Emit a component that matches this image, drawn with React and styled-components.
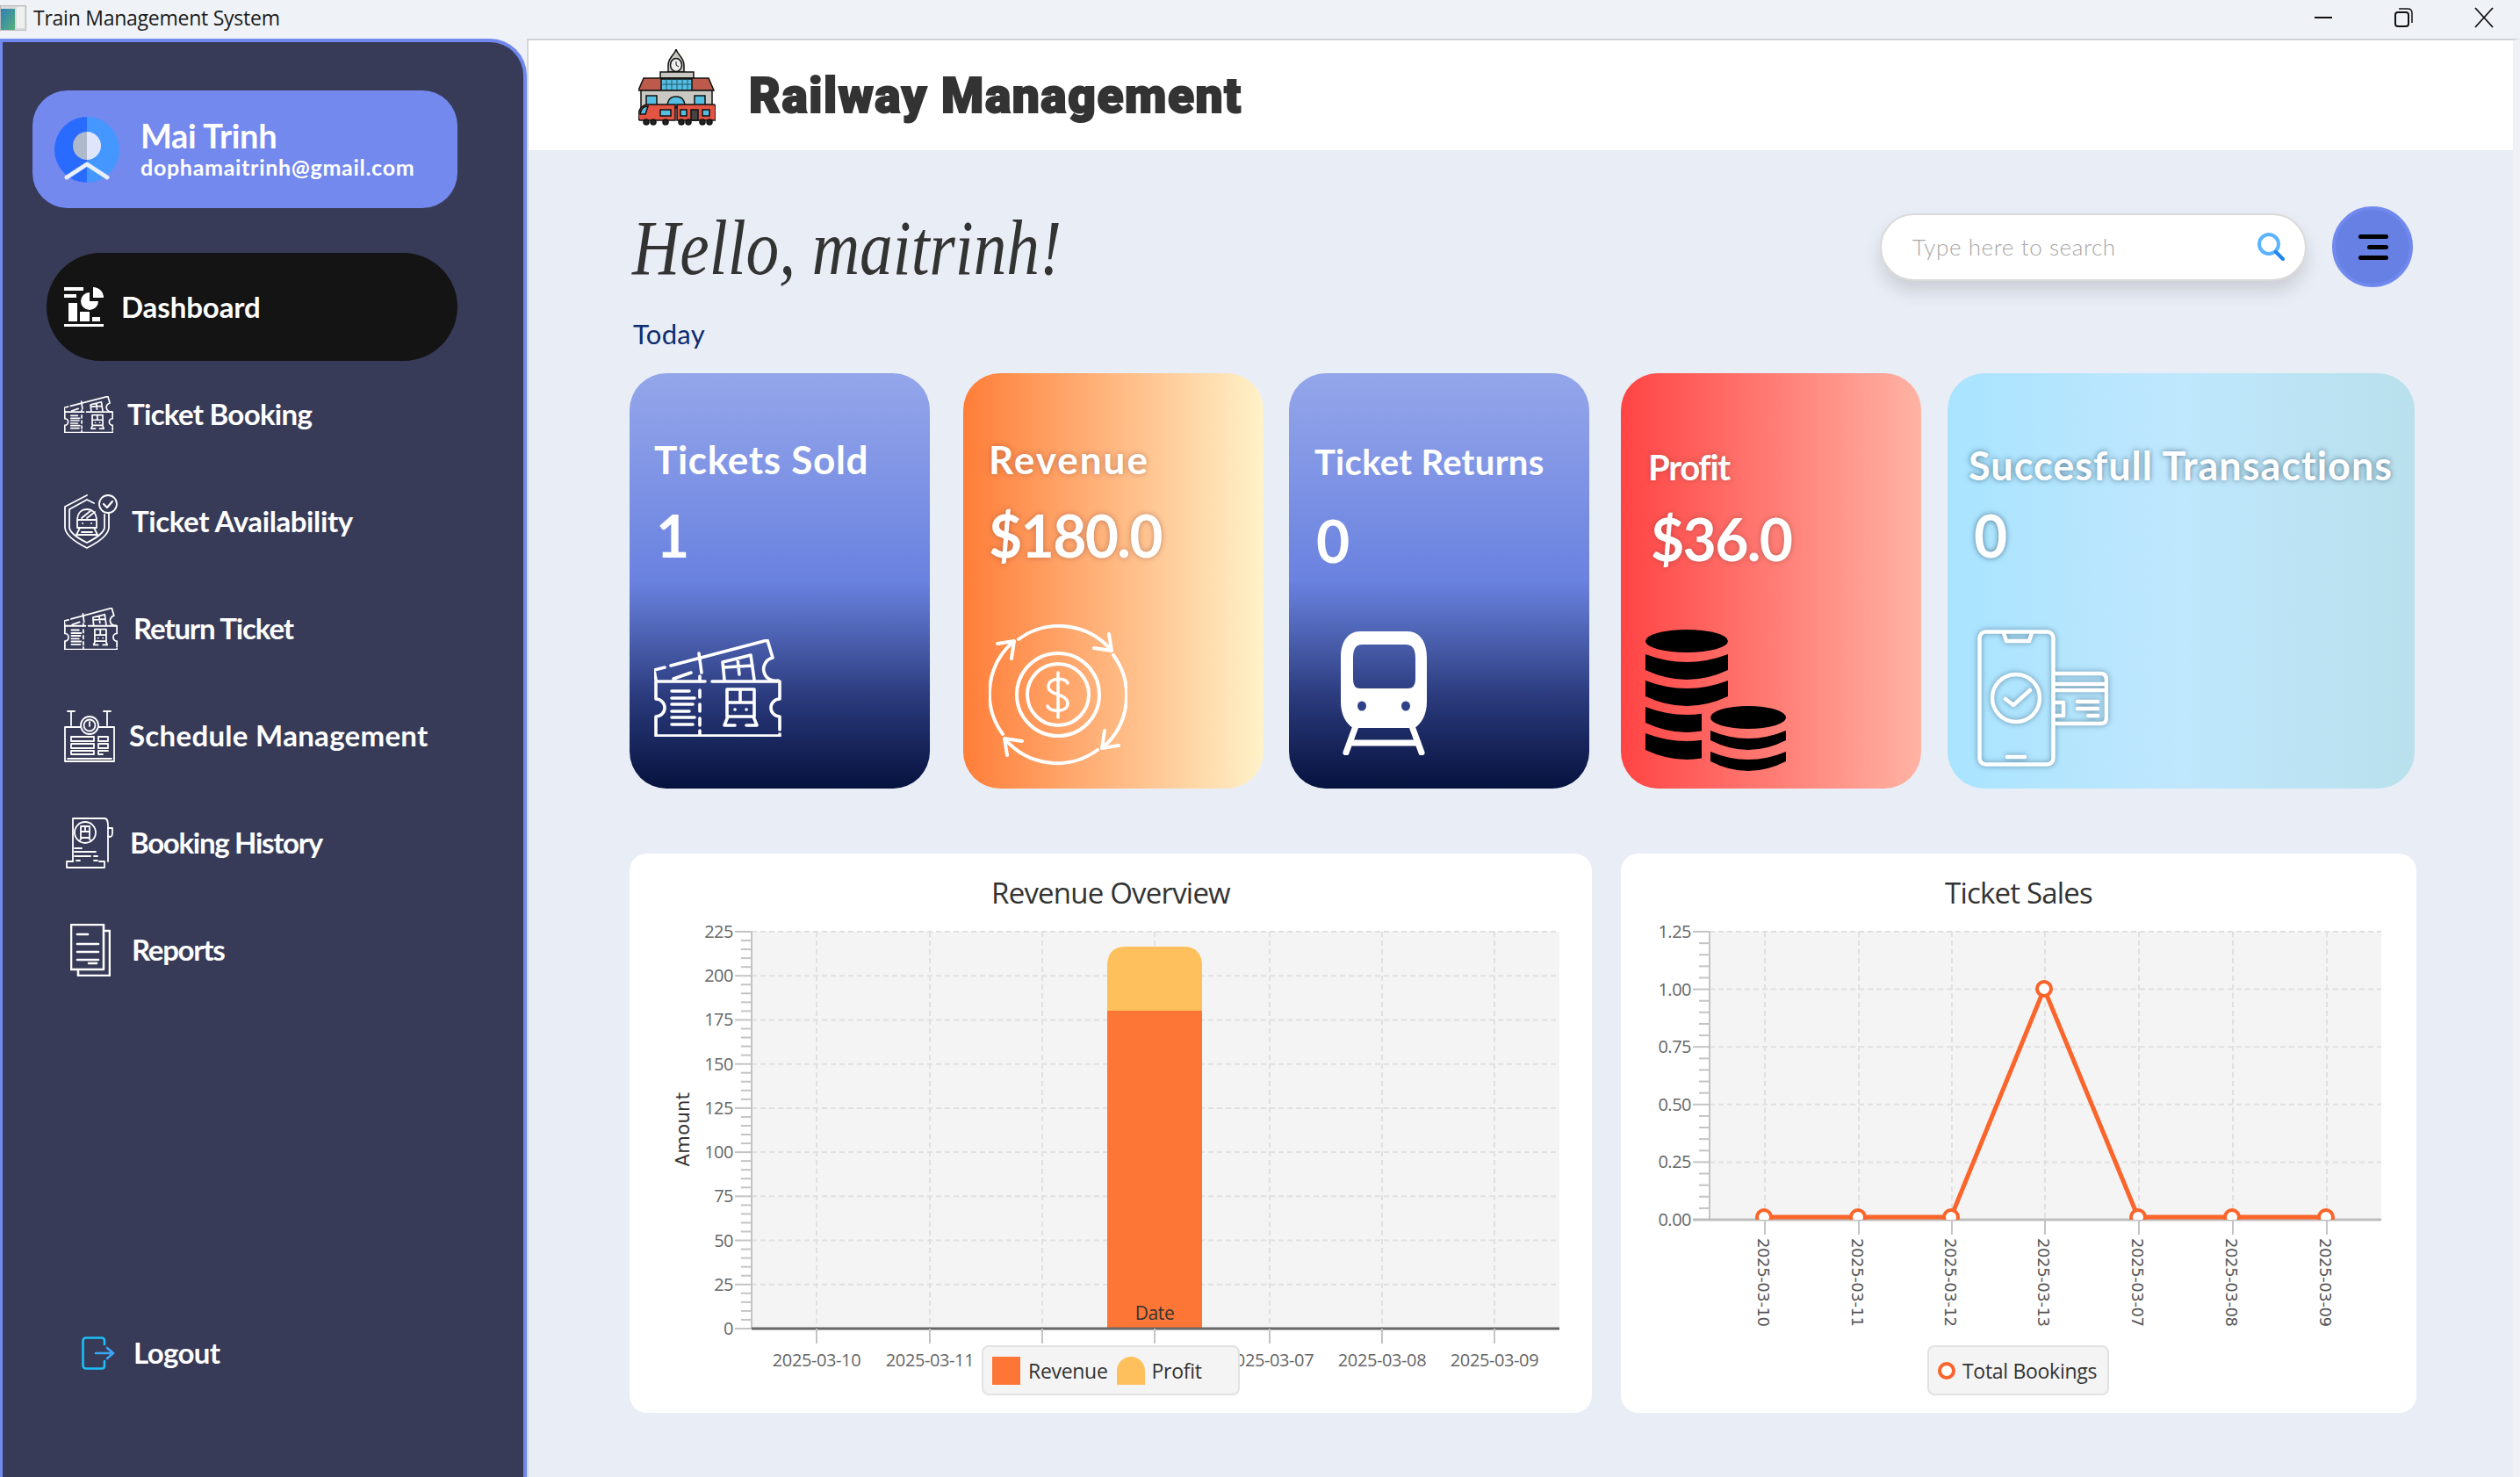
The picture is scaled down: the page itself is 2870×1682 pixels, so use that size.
import React from 'react'
import styled, { createGlobalStyle } from 'styled-components'

const GlobalStyle = createGlobalStyle`
html, body {
  margin: 0;
  padding: 0;
  height: 100%;
  background: #eef1f7;
  overflow: hidden;
}
* { box-sizing: border-box; }
`;

const Page = styled.div`
width: 2870px;
height: 1682px;
display: flex;
flex-direction: column;
font-family: Lato, "Open Sans", sans-serif;
`;

const TitleBar = styled.div`
height: 44px;
flex: none;
display: flex;
align-items: center;
background: #eff3f7;
padding-bottom: 4px;
`;

const AppIcon = styled.svg`
width: 30px;
height: 29px;
margin-right: 8px;
`;

const WindowTitle = styled.div`
font-family: "Open Sans", sans-serif;
font-size: 23px;
letter-spacing: -0.25px;
color: #1a1a1a;
flex: 1;
`;

const WinButton = styled.svg`
width: 24px;
height: 24px;
margin-right: ${p => p.$mr}px;
`;

const Body = styled.div`
flex: 1;
display: flex;
min-height: 0;
`;

const Sidebar = styled.div`
width: 600px;
flex: none;
display: flex;
flex-direction: column;
background: #373b58;
border: solid #7189ee;
border-width: 4px 4px 0 3px;
border-top-right-radius: 42px;
padding-top: 55px;
padding-bottom: 80px;
`;

const Profile = styled.div`
width: 484px;
height: 134px;
margin-left: 34px;
flex: none;
display: flex;
align-items: center;
background: #7389ee;
border-radius: 40px;
padding-left: 25px;
`;

const ProfileText = styled.div`
margin-left: 24px;
margin-bottom: 4px;
color: #fff;
`;

const ProfileName = styled.div`
font-size: 38px;
font-weight: 700;
line-height: 44px;
letter-spacing: -0.3px;
`;

const ProfileMail = styled.div`
font-size: 25px;
font-weight: 700;
line-height: 28px;
letter-spacing: 0.7px;
`;

const Nav = styled.div`
margin-top: 51px;
flex: 1;
display: flex;
flex-direction: column;
`;

const NavItem = styled.div`
flex: none;
height: ${p => (p.$active ? 123 : 122)}px;
width: ${p => (p.$active ? 468 : 520)}px;
margin-left: ${p => (p.$active ? 50 : 0)}px;
padding-left: ${p => (p.$active ? 20 : 70)}px;
display: flex;
align-items: center;
background: ${p => (p.$active ? '#141414' : 'transparent')};
border-radius: 62px;
margin-top: ${p => (p.$bottom ? 'auto' : 0)};
`;

const NavIconSlot = styled.div`
width: ${p => p.$w}px;
flex: none;
display: flex;
padding-left: ${p => p.$pl || 0}px;
`;

const NavLabel = styled.div`
font-size: 33px;
font-weight: 700;
color: #fff;
letter-spacing: ${p => p.$ls || 0}px;
padding-bottom: 2px;
`;

const Main = styled.div`
flex: 1;
display: flex;
flex-direction: column;
background: #e9edf5;
border-left: 2px solid #d6d8e0;
border-top: 2px solid #cfd1d8;
border-right: 8px solid #eff1f7;
min-width: 0;
`;

const Header = styled.div`
height: 125px;
flex: none;
background: #fff;
display: flex;
align-items: center;
padding-left: 125px;
`;

const LogoWrap = styled.div`
line-height: 0;
margin-bottom: 18px;
`;

const Brand = styled.div`
margin-left: 38px;
font-family: "Roboto", sans-serif;
font-size: 55px;
font-weight: 900;
letter-spacing: 1.6px;
color: #333;
-webkit-text-stroke: 2px #333;
`;

const GreetingRow = styled.div`
margin-top: 64px;
height: 92px;
flex: none;
display: flex;
align-items: center;
padding-left: 118px;
padding-right: 114px;
`;

const Greeting = styled.div`
font-family: "Liberation Serif", serif;
font-style: italic;
font-size: 88px;
color: #333;
flex: 1;
margin-top: 2px;
transform: scaleX(0.855);
transform-origin: left center;
`;

const SearchBox = styled.div`
width: 486px;
height: 77px;
display: flex;
align-items: center;
background: #fff;
border: 2px solid #dadada;
border-radius: 39px;
box-shadow: 0 12px 20px rgba(0, 0, 0, 0.13);
padding: 0 23px 0 35px;
justify-content: space-between;
`;

const SearchText = styled.span`
font-size: 26px;
font-weight: 300;
letter-spacing: 0.6px;
color: #a8a6a6;
`;

const MenuButton = styled.div`
width: 92px;
height: 92px;
margin-left: 29px;
border-radius: 50%;
background: #6680e3;
border: 4px solid #7189ee;
display: flex;
flex-direction: column;
align-items: flex-end;
justify-content: center;
gap: 7px;
padding-right: 24px;
`;

const MenuLine = styled.div`
height: 5px;
width: ${p => p.$w}px;
background: #000;
border-radius: 3px;
`;

const Today = styled.div`
margin-top: 33px;
padding-left: 119px;
line-height: 40px;
font-size: 31px;
font-weight: 400;
letter-spacing: 0.3px;
color: #0d2c6e;
`;

const CardRow = styled.div`
margin-top: 25px;
padding-left: 115px;
display: flex;
height: 473px;
flex: none;
`;

const StatCard = styled.div`
width: ${p => p.$w}px;
margin-left: ${p => p.$gap || 0}px;
padding-top: ${p => p.$pt}px;
padding-left: ${p => p.$pl}px;
background: ${p => p.$bg};
border-radius: 42px;
color: #fff;
white-space: nowrap;
`;

const StatTitle = styled.div`
height: 60px;
line-height: 60px;
font-size: ${p => p.$size}px;
font-weight: 700;
letter-spacing: ${p => p.$ls || 0}px;
text-shadow: ${p => p.$shadow || 'none'};
`;

const StatValue = styled.div`
height: 80px;
line-height: 80px;
margin-top: ${p => p.$mt}px;
margin-left: ${p => p.$ml || 0}px;
font-size: 66px;
font-weight: 700;
letter-spacing: -1.7px;
text-shadow: ${p => p.$shadow || 'none'};
`;

const StatIcon = styled.div`
margin-top: ${p => p.$mt}px;
margin-left: ${p => p.$ml || 0}px;
line-height: 0;
filter: ${p => p.$glow ? 'drop-shadow(0 0 3px rgba(50, 85, 110, 0.6))' : 'none'};
`;

const ChartRow = styled.div`
margin-top: 74px;
padding-left: 115px;
display: flex;
gap: 33px;
`;

const ChartCard = styled.div`
position: relative;
width: ${p => p.$w}px;
height: 637px;
background: #fff;
border-radius: 20px;
`;

const ChartTitle = styled.div`
height: 88px;
line-height: 90px;
text-align: center;
font-family: "Open Sans", sans-serif;
font-size: 33px;
letter-spacing: -0.8px;
color: #333;
`;

const ChartSvg = styled.svg`
display: block;
overflow: visible;
font-family: "Open Sans", sans-serif;
`;

const Legend = styled.div`
position: absolute;
top: 560px;
left: ${p => p.$left}px;
width: ${p => p.$w}px;
height: 57px;
display: flex;
align-items: center;
padding-left: ${p => p.$pl}px;
background: #f4f4f4;
border: 2px solid #e2e2e2;
border-radius: 8px;
font-family: "Open Sans", sans-serif;
font-size: 23px;
letter-spacing: -0.3px;
color: #333;
`;

const Swatch = styled.div`
width: 32px;
height: 32px;
margin-right: ${p => p.$mr}px;
background: ${p => p.$color};
border-radius: ${p => p.$round ? '16px 16px 0 0' : '0'};
`;

const LegendDot = styled.div`
width: 20px;
height: 20px;
margin-right: 8px;
border: 4px solid #fb642a;
border-radius: 50%;
background: #fff;
`;

const LegendLabel = styled.span`
margin-right: ${p => p.$mr || 0}px;
`;

const line = { fill: 'none', stroke: '#fff', strokeLinecap: 'round', strokeLinejoin: 'round' };

const TicketIcon = ({ w, h, sw }) => (
  <svg width={w} height={h} viewBox="0 0 145 111" preserveAspectRatio="none" {...line} strokeWidth={sw}>
    <path d="M58 48H2V68A10 10 0 0 1 2 88V110H143V108M143 103V88A10 10 0 0 1 143 68V48H66" />
    <path d="M52 42V48M52 58V66M52 74V82M52 90V98M52 104V110" />
    <path d="M2 46L0 35L12 32M19 30L129 1L135 21A12 12 0 0 0 141 47" />
    <path d="M51 16L54 38" />
    <path d="M22 45L42 38" />
    <path d="M80 46L78 26L110 18L114 46M79 32L112 30M95 22L97 40" />
    <path d="M20 59H40M20 67H46M20 74H44M20 82H40M20 89H46M20 97H44" />
    <path d="M83 57H114V88H83ZM83 72H114M98 57V72M80 98L84 88M117 98L113 88M80 98H92M105 98H117M92 80H92.1M105 80H105.1" />
  </svg>
);

const DashboardIcon = () => (
  <svg width="45" height="45" viewBox="0 0 45 45" fill="#fff">
    <rect x="0" y="0" width="22" height="4" />
    <rect x="0" y="8" width="14" height="4" />
    <path d="M29 6A10 10 0 1 0 39 16H29Z" />
    <path d="M33 0A12 12 0 0 1 45 12H33Z" />
    <rect x="5" y="18" width="10" height="21" />
    <rect x="18" y="28" width="11" height="11" />
    <rect x="32" y="34" width="9" height="5" />
    <rect x="0" y="42" width="45" height="3" />
  </svg>
);

const AvailabilityIcon = () => (
  <svg width="61" height="62" viewBox="0 0 61 62" {...line} strokeWidth="1.8">
    <path d="M26 1L1 14V38C2 48 16 56 26 61C36 56 50 48 51 38V21" />
    <path d="M26 6L6 17V38C7 45 18 51 26 55C34 51 45 45 46 38V23M34 10L26 6" />
    <path d="M15 30C15 22 19 17 26 17C33 17 37 22 37 30V38H15ZM15 29H37M20 27L31 18M26 27L35 20" />
    <path d="M18 38L14 46H38L34 38M20 43H32M21 33H21.1M31 33H31.1" />
    <circle cx="50" cy="11" r="10" />
    <path d="M45 11L49 15L55 8" strokeWidth="2.2" />
  </svg>
);

const ScheduleIcon = () => (
  <svg width="58" height="59" viewBox="0 0 58 59" {...line} strokeWidth="1.8">
    <path d="M4 1H12M8 1V17M45 1H53M49 1V17" />
    <circle cx="29" cy="17" r="10" />
    <circle cx="29" cy="17" r="6.5" />
    <path d="M29 13V18" />
    <path d="M19 19H1V58H57V19H39" />
    <path d="M4 55H54M8 30H34V35H8ZM8 38H34V43H8ZM8 46H34V50H8ZM39 30H50V35H39ZM39 38H50V43H39ZM39 46H50M39 46V50H44" />
  </svg>
);

const HistoryIcon = () => (
  <svg width="54" height="58" viewBox="0 0 54 58" {...line} strokeWidth="1.8">
    <path d="M8 50V1H44C48 1 48 6 48 10V50" />
    <path d="M48 12H53V18C53 22 50 23 48 21" />
    <path d="M8 50H1V57H44V50H38" />
    <circle cx="22" cy="17" r="12" />
    <path d="M17 10H27V23H17ZM17 16H27M22 10V16M16 26L18 23M28 26L26 23" />
    <path d="M10 35H18M10 39H34M10 44H28M32 44H36M12 49H16M32 49H36" />
  </svg>
);

const ReportsIcon = () => (
  <svg width="46" height="60" viewBox="0 0 46 60" {...line} strokeWidth="2.6">
    <path d="M1 1H38V52H1Z" />
    <path d="M40 8H45V59H9V54" />
    <path d="M8 12H20M8 23H32M8 32H32M8 41H32" />
    <path d="M21 45H30" />
  </svg>
);

const LogoutIcon = () => (
  <svg width="38" height="38" viewBox="0 0 38 38" fill="none" strokeWidth="2.6" strokeLinecap="round">
    <path d="M26 9V5C26 3 25 1.5 23 1.5H5C3 1.5 1.5 3 1.5 5V33C1.5 35 3 36.5 5 36.5H23C25 36.5 26 35 26 33V28" stroke="#1bc0f8" />
    <path d="M16 19H36M29 13L36 19L29 25" stroke="#3ea5f5" />
  </svg>
);

const Avatar = () => (
  <svg width="74" height="75" viewBox="0 0 74 75">
    <path d="M37 0A37 37.5 0 0 0 37 75Z" fill="#2a6bff" />
    <path d="M37 0A37 37.5 0 0 1 37 75Z" fill="#4397ff" />
    <path d="M37 17A16 16 0 0 0 37 49Z" fill="#aeb9cc" />
    <path d="M37 17A16 16 0 0 1 37 49Z" fill="#dfe6fb" />
    <path d="M14 69L37 54L60 69" fill="none" stroke="#e8efff" strokeWidth="5" strokeLinecap="round" strokeLinejoin="round" />
  </svg>
);

const Logo = () => (
  <svg width="88" height="87" viewBox="0 0 88 87" stroke="#111" strokeWidth="1.5">
    <path d="M43 0C44 6 52 9 52 18V26H34V18C34 9 42 6 43 0Z" fill="#c9c8c2" />
    <ellipse cx="43" cy="18" rx="6.5" ry="7.5" fill="#eee" />
    <path d="M43 14V18L46 20" fill="none" strokeWidth="1" />
    <rect x="25" y="26" width="38" height="7" fill="#c9c8c2" />
    <path d="M6 33H80L86 47H0Z" fill="#bc5b4c" />
    <rect x="26" y="34" width="35" height="13" fill="#55bfe3" />
    <path d="M32 34V47M38 34V47M44 34V47M50 34V47M56 34V47M26 40H61" strokeWidth="1" stroke="#24566b" />
    <rect x="3" y="47" width="81" height="20" fill="#c9c8c2" />
    <rect x="9" y="53" width="12" height="12" fill="#55bfe3" />
    <rect x="64" y="53" width="12" height="12" fill="#55bfe3" />
    <path d="M33 66C33 58 37 54 43 54C49 54 53 58 53 66Z" fill="#55bfe3" />
    <path d="M2 81C0 81 0 79 0 74C1 68 4 64 10 63H42V81Z" fill="#e45442" />
    <path d="M44 63H86C88 63 88 65 88 68V81H44Z" fill="#e45442" />
    <path d="M2 74C3 68 6 65 11 65L8 74Z" fill="#55bfe3" />
    <rect x="25" y="69" width="12" height="7" fill="#55bfe3" />
    <rect x="48" y="69" width="7" height="7" fill="#55bfe3" />
    <rect x="73" y="69" width="8" height="7" fill="#55bfe3" />
    <rect x="60" y="69" width="8" height="12" fill="#444" />
    <circle cx="9" cy="83" r="3" fill="#222" />
    <circle cx="17" cy="83" r="3" fill="#222" />
    <circle cx="31" cy="83" r="3" fill="#222" />
    <circle cx="49" cy="83" r="3" fill="#222" />
    <circle cx="57" cy="83" r="3" fill="#222" />
    <circle cx="73" cy="83" r="3" fill="#222" />
    <circle cx="81" cy="83" r="3" fill="#222" />
  </svg>
);

const arrowAngles = [0, 90, 180, 270];

const RevenueIcon = () => (
  <svg width="158" height="161" viewBox="0 0 158 161" {...line} strokeWidth="4">
    <circle cx="79" cy="80" r="47" />
    <circle cx="79" cy="80" r="35" />
    <path d="M90 67C88 60 68 60 68 71C68 81 90 79 90 90C90 101 69 100 67 93M79 55V106" strokeWidth="3.5" />
    {arrowAngles.map(a => (
      <g key={a} transform={`rotate(${a} 79 80)`}>
        <path d="M34 17A78 78 0 0 1 140 30M137 11L140 30L120 27" />
      </g>
    ))}
  </svg>
);

const TrainIcon = () => (
  <svg width="98" height="141" viewBox="0 0 98 141">
    <path fill="#fff" fillRule="evenodd" d="M22 0H76C90 0 98 12 98 30V80C98 95 92 105 84 110H14C6 105 0 95 0 80V30C0 12 8 0 22 0ZM24 15H74Q85 15 85 30V55Q85 65 76 65H22Q14 65 14 55V30Q14 15 24 15Z" />
    <ellipse cx="24" cy="85" rx="5" ry="5.5" fill="#2f4188" />
    <ellipse cx="74" cy="85" rx="5" ry="5.5" fill="#2f4188" />
    <path d="M17 108L6 138M81 108L92 138M10 127H88" fill="none" stroke="#fff" strokeWidth="7" strokeLinecap="round" />
  </svg>
);

const coinBand = (x, y, w, h) => {
  const cx = x + w / 2;
  return `M${x} ${y}Q${cx} ${y + 18} ${x + w} ${y}V${y + h - 11}Q${cx} ${y + h + 11} ${x} ${y + h - 11}Z`;
};

const CoinsIcon = () => (
  <svg width="160" height="161" viewBox="0 0 160 161" fill="#000">
    <defs>
      <clipPath id="coinClip"><rect x="0" y="0" width="64" height="161" /></clipPath>
    </defs>
    <ellipse cx="47" cy="13" rx="47" ry="13" />
    <path d={coinBand(0, 28, 94, 29)} />
    <path d={coinBand(0, 58, 94, 29)} />
    <g clipPath="url(#coinClip)">
      <path d={coinBand(0, 88, 94, 29)} />
      <path d={coinBand(0, 118, 94, 30)} />
    </g>
    <ellipse cx="117" cy="100" rx="43" ry="13" />
    <path d={coinBand(74, 115, 86, 22)} />
    <path d={coinBand(74, 139, 86, 22)} />
  </svg>
);

const PhoneIcon = () => (
  <svg width="149" height="156" viewBox="0 0 149 156" {...line} strokeWidth="4.5">
    <rect x="2.5" y="2.5" width="84" height="151" rx="7" />
    <path d="M30 4L33 13H59L62 4" />
    <path d="M34 145H54" />
    <circle cx="44" cy="78" r="27" />
    <path d="M32 79L41 86L60 69" />
    <path d="M88 50H140C145 50 147 53 147 57V100C147 105 145 107 140 107H88" />
    <path d="M88 62H146M88 69H146M88 83H98V98H88" />
    <path d="M114 82H137M114 90H137M126 98H137" />
  </svg>
);

const xLabels = ['2025-03-10', '2025-03-11', '2025-03-12', '2025-03-13', '2025-03-07', '2025-03-08', '2025-03-09'];
const grid = '#e0e0e0';
const tickColor = '#c4c4c4';

const YAxis = ({ left, right, top, bottom, labels, labelX }) => {
  const step = (bottom - top) / (labels.length - 1);
  const minors = [];
  for (let i = 0; i < labels.length - 1; i++) {
    for (let j = 1; j < 5; j++) minors.push(top + i * step + (j * step) / 5);
  }
  return (
    <g>
      {labels.map((l, i) => (
        <g key={l}>
          {i < labels.length - 1 && <line x1={left} x2={right} y1={top + i * step} y2={top + i * step} stroke={grid} strokeWidth="2" strokeDasharray="6 4" />}
          <line x1={left - 19} x2={left} y1={top + i * step} y2={top + i * step} stroke={tickColor} strokeWidth="2" />
          <text x={labelX} y={top + i * step + 7} textAnchor="end" fontSize="20" letterSpacing="-0.5" fill="#666">{l}</text>
        </g>
      ))}
      {minors.map(y => <line key={y} x1={left - 12} x2={left} y1={y} y2={y} stroke={tickColor} strokeWidth="2" />)}
      <line x1={left} x2={left} y1={top} y2={bottom} stroke={tickColor} strokeWidth="2" />
    </g>
  );
};

const RevenueChart = () => {
  const xs = [930, 1059, 1187, 1315, 1446, 1574, 1702];
  return (
    <ChartSvg width="1096" height="549" viewBox="717 1060 1096 549">
      <rect x="856" y="1061" width="920" height="452" fill="#f4f4f4" />
      <YAxis left={856} right={1776} top={1061} bottom={1513} labelX={835} labels={['225', '200', '175', '150', '125', '100', '75', '50', '25', '0']} />
      {xs.map(x => <line key={x} x1={x} x2={x} y1={1061} y2={1513} stroke={grid} strokeWidth="2" strokeDasharray="6 4" />)}
      <path d="M1261 1151V1100C1261 1086 1268 1078 1282 1078H1348C1362 1078 1369 1086 1369 1100V1151Z" fill="#fdc05c" />
      <rect x="1261" y="1151" width="108" height="362" fill="#fd7635" />
      <text x="1315" y="1503" textAnchor="middle" fontSize="21" letterSpacing="-0.4" fill="#333">Date</text>
      <line x1="856" x2="1776" y1="1513" y2="1513" stroke="#666" strokeWidth="3" />
      {xs.map((x, i) => (
        <g key={x}>
          <line x1={x} x2={x} y1={1513} y2={1530} stroke={tickColor} strokeWidth="2" />
          {i !== 2 && i !== 3 && <text x={x} y={1556} textAnchor="middle" fontSize="20" letterSpacing="-0.4" fill="#666">{xLabels[i]}</text>}
        </g>
      ))}
      <text transform="translate(785 1286) rotate(-90)" textAnchor="middle" fontSize="21" fill="#333" fontFamily="'DejaVu Sans', sans-serif" letterSpacing="0.4">Amount</text>
    </ChartSvg>
  );
};

const SalesChart = () => {
  const xs = [2010, 2117, 2223, 2329, 2436, 2543, 2650];
  const ys = [1386, 1386, 1386, 1126, 1386, 1386, 1386];
  const pts = xs.map((x, i) => `${x - 1},${ys[i]}`).join(' ');
  return (
    <ChartSvg width="906" height="549" viewBox="1846 1060 906 549">
      <defs>
        <clipPath id="plotClip"><rect x="1947" y="1061" width="765" height="328" /></clipPath>
      </defs>
      <rect x="1947" y="1061" width="765" height="328" fill="#f4f4f4" />
      <YAxis left={1947} right={2712} top={1061} bottom={1389} labelX={1926} labels={['1.25', '1.00', '0.75', '0.50', '0.25', '0.00']} />
      {xs.map(x => <line key={x} x1={x} x2={x} y1={1061} y2={1389} stroke={grid} strokeWidth="2" strokeDasharray="6 4" />)}
      <line x1="1928" x2="2712" y1="1389" y2="1389" stroke="#bdbdbd" strokeWidth="3" />
      <g clipPath="url(#plotClip)">
        <polyline points={pts} fill="none" stroke="#fb642a" strokeWidth="5" />
        {xs.map((x, i) => <circle key={x} cx={x - 1} cy={ys[i]} r="8" fill="#fff" stroke="#fb642a" strokeWidth="4" />)}
      </g>
      {xs.map((x, i) => (
        <g key={x}>
          <line x1={x} x2={x} y1={1389} y2={1406} stroke={tickColor} strokeWidth="2" />
          <text transform={`translate(${x - 8} 1410) rotate(90)`} fontSize="18" fontFamily="'DejaVu Sans', sans-serif" letterSpacing="-0.4" fill="#555">{xLabels[i]}</text>
        </g>
      ))}
    </ChartSvg>
  );
};

const blueCard = 'linear-gradient(180deg, #94a6ea 0%, #6a82e0 50%, #4f65b6 62%, #2a3a7c 78%, #06123e 100%)';
const softShadow = '0 0 6px rgba(120, 60, 50, 0.45)';
const darkShadow = '0 0 6px rgba(50, 85, 110, 0.75)';

const App = () => {
  return (
    <Page>
      <GlobalStyle />
      <TitleBar>
        <AppIcon viewBox="0 0 30 29">
          <defs>
            <linearGradient id="appGrad" x1="0" y1="0" x2="1" y2="1">
              <stop offset="0" stopColor="#2f7fb8" />
              <stop offset="1" stopColor="#57b078" />
            </linearGradient>
          </defs>
          <rect x="0" y="0" width="30" height="29" fill="#d8dadb" stroke="#9a9a9a" />
          <rect x="1" y="4" width="16" height="24" fill="url(#appGrad)" />
          <rect x="19" y="2" width="9" height="24" fill="#eef0ee" />
        </AppIcon>
        <WindowTitle>Train Management System</WindowTitle>
        <WinButton $mr={67} viewBox="0 0 24 24"><path d="M2 12H22" stroke="#111" strokeWidth="2" /></WinButton>
        <WinButton $mr={68} viewBox="0 0 24 24" fill="none" stroke="#111" strokeWidth="2"><rect x="3" y="6" width="15" height="16" rx="3" /><path d="M7 2H17C20 2 22 4 22 7V18" strokeWidth="1.5" /></WinButton>
        <WinButton $mr={29} viewBox="0 0 24 24"><path d="M2 1L22 23M22 1L2 23" stroke="#111" strokeWidth="1.8" /></WinButton>
      </TitleBar>
      <Body>
        <Sidebar>
          <Profile>
            <Avatar />
            <ProfileText>
              <ProfileName>Mai Trinh</ProfileName>
              <ProfileMail>dophamaitrinh@gmail.com</ProfileMail>
            </ProfileText>
          </Profile>
          <Nav>
            <NavItem $active>
              <NavIconSlot $w={65}><DashboardIcon /></NavIconSlot>
              <NavLabel $ls={-0.1}>Dashboard</NavLabel>
            </NavItem>
            <NavItem>
              <NavIconSlot $w={72}><TicketIcon w={56} h={42} sw={4.4} /></NavIconSlot>
              <NavLabel $ls={-0.7}>Ticket Booking</NavLabel>
            </NavItem>
            <NavItem>
              <NavIconSlot $w={77}><AvailabilityIcon /></NavIconSlot>
              <NavLabel $ls={-0.4}>Ticket Availability</NavLabel>
            </NavItem>
            <NavItem>
              <NavIconSlot $w={79}><TicketIcon w={61} h={48} sw={4.2} /></NavIconSlot>
              <NavLabel $ls={-1.15}>Return Ticket</NavLabel>
            </NavItem>
            <NavItem>
              <NavIconSlot $w={74}><ScheduleIcon /></NavIconSlot>
              <NavLabel $ls={0.3}>Schedule Management</NavLabel>
            </NavItem>
            <NavItem>
              <NavIconSlot $w={75} $pl={2}><HistoryIcon /></NavIconSlot>
              <NavLabel $ls={-1.3}>Booking History</NavLabel>
            </NavItem>
            <NavItem>
              <NavIconSlot $w={77} $pl={7}><ReportsIcon /></NavIconSlot>
              <NavLabel $ls={-1.3}>Reports</NavLabel>
            </NavItem>
            <NavItem $bottom>
              <NavIconSlot $w={79} $pl={20}><LogoutIcon /></NavIconSlot>
              <NavLabel $ls={-0.6}>Logout</NavLabel>
            </NavItem>
          </Nav>
        </Sidebar>
        <Main>
          <Header>
            <LogoWrap><Logo /></LogoWrap>
            <Brand>Railway Management</Brand>
          </Header>
          <GreetingRow>
            <Greeting>Hello, maitrinh!</Greeting>
            <SearchBox>
              <SearchText>Type here to search</SearchText>
              <svg width="31" height="32" viewBox="0 0 31 32" fill="none" strokeLinecap="round">
                <circle cx="13" cy="13" r="11" stroke="#5cb4ff" strokeWidth="4" />
                <path d="M21 22L29 30" stroke="#1f83f2" strokeWidth="4" />
              </svg>
            </SearchBox>
            <MenuButton>
              <MenuLine $w={34} />
              <MenuLine $w={24} />
              <MenuLine $w={34} />
            </MenuButton>
          </GreetingRow>
          <Today>Today</Today>
          <CardRow>
            <StatCard $w={342} $pt={68} $pl={28} $bg={blueCard}>
              <StatTitle $size={44} $ls={0.7}>Tickets Sold</StatTitle>
              <StatValue $mt={17} $ml={2}>1</StatValue>
              <StatIcon $mt={78}><TicketIcon w={145} h={111} sw={3.6} /></StatIcon>
            </StatCard>
            <StatCard $w={342} $gap={38} $pt={68} $pl={29} $bg="linear-gradient(90deg, #ff7d38 0%, #fff2c9 100%)">
              <StatTitle $size={44} $ls={2} $shadow={softShadow}>Revenue</StatTitle>
              <StatValue $mt={17} $shadow={softShadow}>$180.0</StatValue>
              <StatIcon $mt={61}><RevenueIcon /></StatIcon>
            </StatCard>
            <StatCard $w={342} $gap={29} $pt={71} $pl={29} $bg={blueCard}>
              <StatTitle $size={40} $ls={0.3}>Ticket Returns</StatTitle>
              <StatValue $mt={20} $ml={2}>0</StatValue>
              <StatIcon $mt={63} $ml={30}><TrainIcon /></StatIcon>
            </StatCard>
            <StatCard $w={342} $gap={36} $pt={77} $pl={31} $bg="linear-gradient(90deg, #ff4444 0%, #ffb3a4 100%)">
              <StatTitle $size={40} $ls={-1.3} $shadow={softShadow}>Profit</StatTitle>
              <StatValue $mt={12} $ml={3} $shadow={softShadow}>$36.0</StatValue>
              <StatIcon $mt={63} $ml={-3}><CoinsIcon /></StatIcon>
            </StatCard>
            <StatCard $w={532} $gap={30} $pt={75} $pl={24} $bg="linear-gradient(90deg, #a9e4ff 0%, #bfe7fd 50%, #b9e0ec 100%)">
              <StatTitle $size={45} $ls={1} $shadow={darkShadow}>Succesfull Transactions</StatTitle>
              <StatValue $mt={10} $ml={6} $shadow={darkShadow}>0</StatValue>
              <StatIcon $mt={67} $ml={10} $glow><PhoneIcon /></StatIcon>
            </StatCard>
          </CardRow>
          <ChartRow>
            <ChartCard $w={1096}>
              <ChartTitle>Revenue Overview</ChartTitle>
              <RevenueChart />
              <Legend $left={401} $w={294} $pl={10}>
                <Swatch $color="#fd7635" $mr={9} />
                <LegendLabel $mr={10}>Revenue</LegendLabel>
                <Swatch $color="#fdc05c" $round $mr={8} />
                <LegendLabel>Profit</LegendLabel>
              </Legend>
            </ChartCard>
            <ChartCard $w={906}>
              <ChartTitle>Ticket Sales</ChartTitle>
              <SalesChart />
              <Legend $left={349} $w={207} $pl={10}>
                <LegendDot />
                <LegendLabel>Total Bookings</LegendLabel>
              </Legend>
            </ChartCard>
          </ChartRow>
        </Main>
      </Body>
    </Page>
  );
};

export default App;
